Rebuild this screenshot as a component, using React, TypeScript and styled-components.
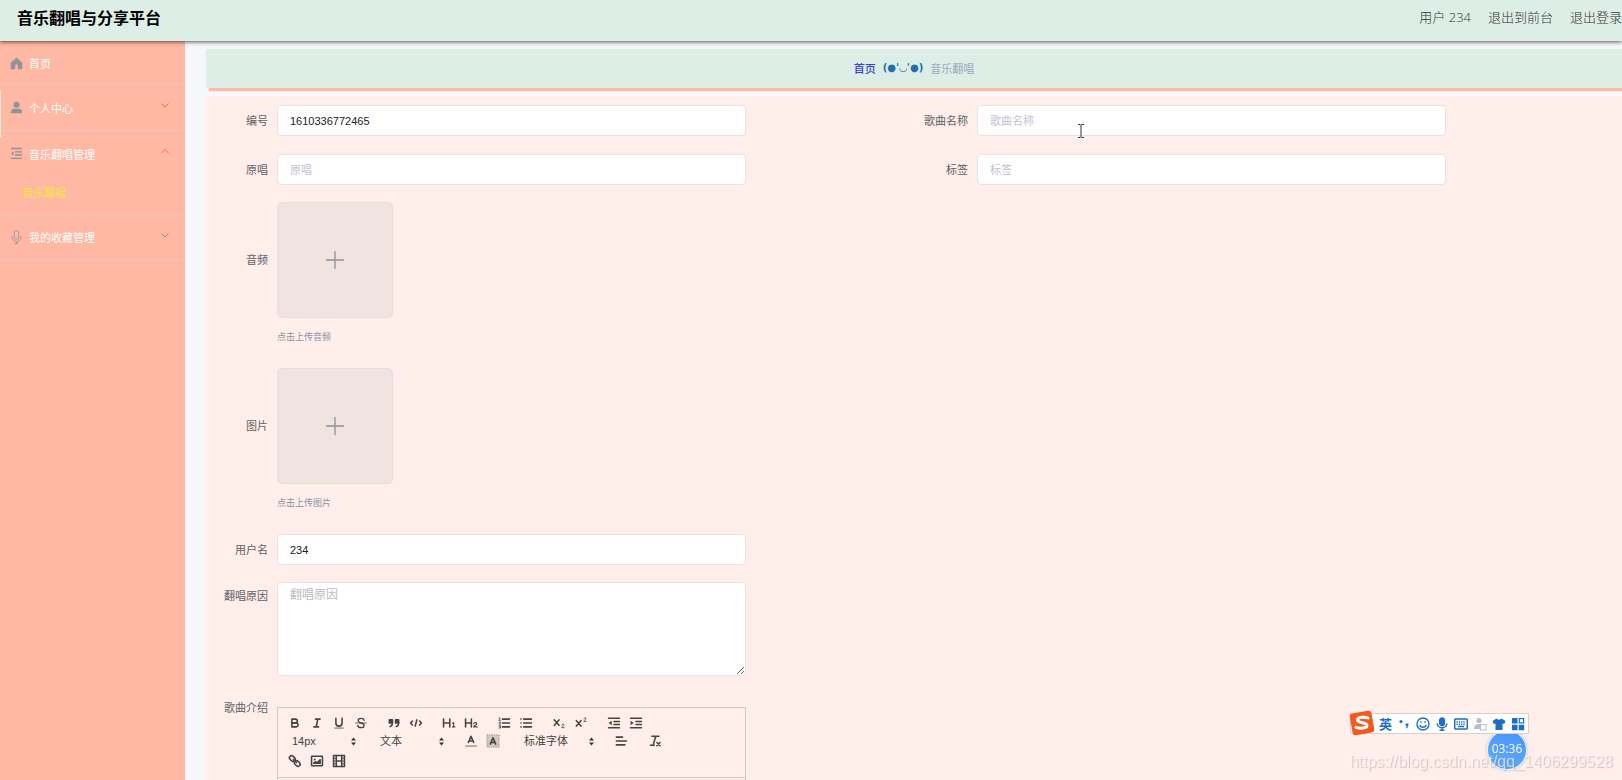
import React from 'react';
import styled, { createGlobalStyle } from 'styled-components';

const SANS = '"Liberation Sans", "Noto Sans CJK SC", sans-serif';

const GlobalStyle = createGlobalStyle`
  * { box-sizing: border-box; }
  html, body, #root { height: 100%; }
  body { margin: 0; font-family: ${SANS}; font-size: 11px; overflow: hidden; }
  button, input, textarea, select { font-family: inherit; margin: 0; }
  a { text-decoration: none; color: inherit; }
  svg { display: block; }
`;

const Shell = styled.div`
  display: flex;
  flex-direction: column;
  height: 100vh;
  overflow: hidden;
  background: #f5f7fa;
`;

const Header = styled.header`
  display: flex;
  align-items: center;
  justify-content: space-between;
  flex: none;
  height: 41px;
  padding: 0 0 3px 17px;
  background: #ddeee7;
  box-shadow: 0 1px 4px rgba(0, 0, 0, 0.65);
  position: relative;
  z-index: 2;
`;

const Brand = styled.h1`
  margin: 0;
  font-size: 16px;
  line-height: 24px;
  font-weight: 700;
  color: #000;
`;

const HeaderNav = styled.nav`
  display: flex;
  gap: 17px;
  padding-bottom: 4px;
  font-family: "Open Sans", "Noto Sans CJK SC", sans-serif;
  font-size: 13px;
  line-height: 20px;
  font-weight: 300;
  color: #333;
  white-space: nowrap;
`;

const Body = styled.div`
  display: flex;
  flex: 1;
  min-height: 0;
`;

const Sidebar = styled.aside`
  flex: none;
  width: 185px;
  background: #ffb8a4;
  position: relative;
`;

const SideHandle = styled.span`
  position: absolute;
  left: 0;
  top: 49px;
  width: 1px;
  height: 47px;
  background: #fde5df;
`;

const Group = styled.div`
  border-bottom: 1px solid #e8c8c0;
`;

const GroupHead = styled.button<{ $h: number }>`
  display: flex;
  align-items: center;
  gap: 6px;
  width: 100%;
  height: ${p => p.$h}px;
  padding: 0 16px 0 10px;
  border: 0;
  background: transparent;
  font-size: 11px;
  color: #fff;
  text-align: left;
  & > span { flex: 1; }
`;

const ChevronIcon = styled.svg`
  margin-bottom: 5px;
`;

const SubLink = styled.a`
  display: block;
  height: 38px;
  padding-left: 22px;
  line-height: 34px;
  font-size: 11px;
  color: #f5e63c;
`;

const Main = styled.main`
  flex: 1;
  min-width: 0;
  display: flex;
  flex-direction: column;
  gap: 8px;
  padding: 8px 0 0 21px;
`;

const Crumbs = styled.nav`
  display: flex;
  align-items: center;
  justify-content: center;
  gap: 7px;
  flex: none;
  height: 39px;
  padding-bottom: 2px;
  background: #ddeee7;
  box-shadow: 3px 3px 1px #ffb8a4;
  color: #97a8be;
  font-size: 11px;
  white-space: nowrap;
`;

const CrumbHome = styled.a`
  color: #3a3fd8;
  font-weight: 500;
`;

const CrumbFace = styled.span`
  color: #1f6fb0;
  font-size: 10px;
  font-weight: 700;
  font-family: "DejaVu Sans", sans-serif;
`;

const Panel = styled.form`
  flex: 1;
  display: flex;
  flex-direction: column;
  padding: 9px 16px 0 0;
  background: #ffeee9;
`;

const Row = styled.div<{ $gap?: number }>`
  display: grid;
  grid-template-columns: 1fr 1fr;
  flex: none;
  margin-bottom: ${p => p.$gap ?? 18}px;
`;

const Field = styled.div<{ $top?: boolean }>`
  display: grid;
  grid-template-columns: 62px 67%;
  column-gap: 9px;
  align-items: ${p => (p.$top ? 'start' : 'center')};
`;

const Label = styled.label`
  text-align: right;
  line-height: 28px;
  color: #606266;
  white-space: nowrap;
`;

const Input = styled.input`
  width: 100%;
  height: 31px;
  padding: 0 12px;
  border: 1px solid #e4e4ea;
  border-radius: 4px;
  background: #fff;
  font-size: 11px;
  color: #222;
  outline: 0;
  &::placeholder { color: #c0c4cc; opacity: 1; }
`;

const TextArea = styled.textarea`
  display: block;
  width: 100%;
  height: 94px;
  padding: 4px 12px;
  border: 1px solid #e4e4ea;
  border-radius: 4px;
  background: #fff;
  font-size: 12px;
  line-height: 16px;
  resize: vertical;
  outline: 0;
  &::placeholder { color: #bbb; opacity: 1; }
`;

const UploadBox = styled.button`
  display: flex;
  align-items: center;
  justify-content: center;
  width: 116px;
  height: 116px;
  padding: 0;
  border: 1px solid #e2dfe3;
  border-radius: 5px;
  background: #f0e3e0;
`;

const Tip = styled.p`
  margin: 12px 0 0 71px;
  font-size: 9px;
  line-height: 14px;
  color: #8d91a3;
`;

const Upload = styled.div`
  flex: none;
  margin-bottom: 24px;
`;

const Editor = styled.div`
  height: 300px;
  margin-top: 13px;
  border: 1px solid #ccc;
`;

const Toolbar = styled.div`
  padding: 6px;
  border-bottom: 1px solid #ccc;
`;

const ToolRow = styled.div<{ $gap?: number; $h?: number }>`
  display: flex;
  gap: ${p => p.$gap ?? 12}px;
  height: ${p => p.$h ?? 18}px;
`;

const ToolGroup = styled.span`
  display: flex;
  align-items: center;
`;

const Tool = styled.button`
  display: flex;
  align-items: center;
  justify-content: center;
  width: 22px;
  height: 18px;
  padding: 0;
  border: 0;
  background: transparent;
  svg {
    width: 14px;
    height: 14px;
    fill: none;
    stroke: #444;
    stroke-width: 2;
    stroke-linecap: round;
    stroke-linejoin: round;
  }
  .fill { fill: #444; stroke: none; }
  .thin { stroke-width: 1; }
`;

const Picker = styled.span<{ $w: number }>`
  display: flex;
  align-items: center;
  width: ${p => p.$w}px;
  padding: 0 4px 0 8px;
  svg { flex: none; width: 5px; height: 9px; fill: #333; }
`;

const PickerSelect = styled.select`
  flex: 1;
  min-width: 0;
  padding: 0;
  border: 0;
  appearance: none;
  background: transparent;
  font-size: 11px;
  line-height: 16px;
  color: #444;
`;

const ImeBar = styled.div`
  position: fixed;
  right: 93px;
  bottom: 46px;
  z-index: 5;
  display: flex;
  align-items: center;
  gap: 5px;
  height: 21px;
  padding: 0 3px 0 28px;
  border: 1px solid #dccfd0;
  background: #fff;
  color: #1d6fc6;
  font-size: 13px;
  font-weight: 700;
  svg { width: 14px; height: 14px; }
`;

const ImeLogo = styled.span`
  position: absolute;
  left: -2px;
  top: -4px;
  svg { width: 26px; height: 26px; }
`;

const Timer = styled.div`
  position: fixed;
  right: 95px;
  bottom: 10px;
  z-index: 4;
  width: 40px;
  height: 40px;
  border: 1px solid #e6f0ff;
  border-radius: 50%;
  background: linear-gradient(200deg, #4a90f5, #5fb0ff);
  box-shadow: 0 0 3px rgba(90, 140, 220, 0.5);
  font: 12px/36px "Open Sans", sans-serif;
  color: #fff;
  text-align: center;
`;

const Watermark = styled.div`
  position: fixed;
  right: 9px;
  bottom: 8px;
  z-index: 6;
  font-size: 16px;
  line-height: 20px;
  color: rgba(255, 250, 250, 0.65);
  text-shadow: 1px 1px 1px rgba(120, 110, 120, 0.35);
  white-space: nowrap;
`;

const Pointer = styled.svg`
  position: fixed;
  left: 1077px;
  top: 124px;
  z-index: 6;
`;

const Chevron = ({ up }: { up?: boolean }) => (
  <ChevronIcon width="8" height="8" viewBox="0 0 8 8" fill="none" stroke="#f5645a" strokeWidth="1">
    <path d={up ? 'M.5 6 4 2.500 7.500 6' : 'M.5 2.500 4 6 7.500 2.500'} />
  </ChevronIcon>
);

const HomeIcon = () => (
  <svg width="13" height="15" viewBox="0 0 13 15" fill="#909399">
    <path d="M6.500 3 1 7.800V14h3.900v-3.400a1.600 1.600 0 0 1 3.200 0V14H12V7.800z" stroke="#909399" strokeWidth=".6" strokeLinejoin="round" />
  </svg>
);
const UserIcon = () => (
  <svg width="13" height="13" viewBox="0 0 13 13" fill="#909399">
    <circle cx="6.500" cy="3.700" r="3" />
    <path d="M1 12.300V10.600C1 8.800 2.300 7.700 4 7.700h5c1.700 0 3 1.100 3 2.900v1.700z" />
  </svg>
);
const MenuIcon = () => (
  <svg width="13" height="13" viewBox="0 0 13 13" fill="none" stroke="#909399" strokeWidth="1.300">
    <path d="M1 1.500h11M5 4.800h7M5 8h7M1 11.300h11" />
    <path d="M3.500 4.200v4.600L1 6.500z" fill="#909399" stroke="none" />
  </svg>
);
const MicIcon = () => (
  <svg width="13" height="14" viewBox="0 0 13 14" fill="none" stroke="#a39a9b" strokeWidth="1">
    <rect x="4.200" y=".6" width="4.600" height="8.600" rx="2.300" />
    <path d="M2 6v1a4.500 4.500 0 0 0 9 0V6M6.500 11.500v2M4.500 13.500h4" />
  </svg>
);
const Plus = () => (
  <svg width="18" height="18" viewBox="0 0 18 18" stroke="#8c939d" strokeWidth="1.300">
    <path d="M9 0v18M0 9h18" />
  </svg>
);

const icons: Record<string, React.ReactNode> = {
  加粗: (
    <>
      <path d="M5 4h4.500A2.500 2.500 0 0 1 12 6.500 2.500 2.500 0 0 1 9.500 9H5z" />
      <path d="M5 9h5.500A2.500 2.500 0 0 1 13 11.500 2.500 2.500 0 0 1 10.500 14H5z" />
    </>
  ),
  斜体: <path d="M7 4h6M5 14h6M8 14l2-10" />,
  下划线: (
    <>
      <path d="M5 3v6a4 4 0 0 0 8 0V3" />
      <rect className="fill" x="3" y="15" width="12" height="1" />
    </>
  ),
  删除线: (
    <>
      <path className="thin" d="M2 9h14" />
      <path d="M13 5.500C12.500 3.500 10.800 3 9 3 6.800 3 5.300 4 5.300 5.800 5.300 7.600 7 8.400 9 9c2.500.7 4 1.500 4 3.200 0 2-1.800 2.800-4 2.800-2 0-3.800-.8-4.300-2.800" strokeWidth="1.700" />
    </>
  ),
  引用: (
    <>
      <rect className="fill" x="2" y="4" width="6" height="6" rx="1" />
      <rect className="fill" x="10" y="4" width="6" height="6" rx="1" />
      <path d="M7 8c0 3-1 5-3 5.500M15 8c0 3-1 5-3 5.500" />
    </>
  ),
  代码: <path d="M4.500 6.500 2 9l2.500 2.500M13.500 6.500 16 9l-2.500 2.500M10 5 8 13" />,
  标题一: (
    <>
      <path d="M2 4v10M10 4v10M10 9H2" />
      <path d="M13.500 9.500 15 8.500V14M13.500 14h3" strokeWidth="1.400" />
    </>
  ),
  标题二: (
    <>
      <path d="M2 4v10M9.500 4v10M9.500 9H2" />
      <path d="M12.500 10c.3-2 4-2 4 0 0 1.500-4 2.500-4 4h4.500" strokeWidth="1.400" />
    </>
  ),
  有序列表: (
    <>
      <path d="M7 4h9M7 9h9M7 14h9" />
      <path className="thin" d="M2.500 2.500h1v3M2.500 5.500h2M2.500 8h2v1l-2 1.500h2M2.500 12.500h2v3h-2M3 14h1.500" />
    </>
  ),
  无序列表: <path d="M6 4h10M6 9h10M6 14h10M2.500 4h.1M2.500 9h.1M2.500 14h.1" />,
  下标: (
    <>
      <path d="M3 5l6 7M9 5l-6 7" />
      <path className="thin" d="M12.500 11.500c.3-1.500 3-1.300 3 0s-3 2-3 3.500h3.200" />
    </>
  ),
  上标: (
    <>
      <path d="M3 6l6 7M9 6l-6 7" />
      <path className="thin" d="M12.500 3.500c.3-1.500 3-1.300 3 0s-3 2-3 3.500h3.200" />
    </>
  ),
  减少缩进: (
    <>
      <path d="M2 3h14M2 15h14M9 7h7M9 11h7" />
      <path className="fill" d="M6 6v6L2 9z" />
    </>
  ),
  增加缩进: (
    <>
      <path d="M2 3h14M2 15h14M9 7h7M9 11h7" />
      <path className="fill" d="M2 6v6l4-3z" />
    </>
  ),
  字体颜色: (
    <>
      <path d="M5.500 11 9 3l3.500 8M6.800 9h4.500" />
      <path className="thin" d="M2 15.500h14" />
    </>
  ),
  背景颜色: (
    <>
      <rect className="thin" x="1.500" y="1.500" width="15" height="15" strokeDasharray="1 2" />
      <rect x="2" y="2" width="14" height="14" fill="#d3c7c4" stroke="none" />
      <path d="M5.500 13 9 5l3.500 8M6.800 11h4.500" />
    </>
  ),
  对齐: <path d="M3 9h13M3 14h11M3 4h8" />,
  清除格式: (
    <>
      <path d="M5 3h9M7 13 10 3M3 14.500h5" />
      <path d="M11.500 11l4 4M15.500 11l-4 4" />
    </>
  ),
  链接: (
    <>
      <rect x="1.500" y="3" width="8" height="5.500" rx="2.700" transform="rotate(45 5.500 5.700)" />
      <rect x="8" y="9.500" width="8" height="5.500" rx="2.700" transform="rotate(45 12 12.200)" />
      <path d="M7 7l4 4" />
    </>
  ),
  图片: (
    <>
      <rect x="2" y="3" width="14" height="12" rx="0.500" />
      <circle className="fill" cx="6" cy="7" r="1.200" />
      <path className="fill" d="M4 13v-2l3-2 2 1 4-4 1 1v6z" />
    </>
  ),
  视频: (
    <>
      <rect x="2" y="2" width="14" height="14" />
      <path d="M5.500 2v14M12.500 2v14M6 9h6" />
      <path className="thin" d="M2 5.500h3M2 9h3M2 12.500h3M13 5.500h3M13 9h3M13 12.500h3" />
    </>
  ),
};

const Tools = ({ names }: { names: string[] }) => (
  <ToolGroup>
    {names.map(n => (
      <Tool key={n} type="button" aria-label={n}>
        <svg viewBox="0 0 18 18">{icons[n]}</svg>
      </Tool>
    ))}
  </ToolGroup>
);

const PickerBox = ({ label, value, w }: { label: string; value: string; w: number }) => (
  <Picker $w={w}>
    <PickerSelect aria-label={label} defaultValue={value}>
      <option>{value}</option>
    </PickerSelect>
    <svg viewBox="0 0 5 9">
      <path d="M0 3.500 2.500.5 5 3.500zM0 5.500h5L2.500 8.500z" />
    </svg>
  </Picker>
);

type TextFieldProps = { id: string; label: string; value?: string };
const TextField = ({ id, label, value }: TextFieldProps) => (
  <Field>
    <Label htmlFor={id}>{label}</Label>
    <Input id={id} placeholder={label} defaultValue={value} />
  </Field>
);

const UploadField = ({ id, label }: { id: string; label: string }) => (
  <Upload>
    <Field>
      <Label htmlFor={id}>{label}</Label>
      <UploadBox id={id} type="button">
        <Plus />
      </UploadBox>
    </Field>
    <Tip>点击上传{label}</Tip>
  </Upload>
);

export default function App() {
  return (
    <>
      <GlobalStyle />
      <Shell>
        <Header>
          <Brand>音乐翻唱与分享平台</Brand>
          <HeaderNav>
            <span>用户 234</span>
            <a href="#front">退出到前台</a>
            <a href="#logout">退出登录</a>
          </HeaderNav>
        </Header>
        <Body>
          <Sidebar>
            <Group>
              <GroupHead type="button" $h={43}><HomeIcon /><span>首页</span></GroupHead>
            </Group>
            <Group>
              <GroupHead type="button" $h={45}><UserIcon /><span>个人中心</span><Chevron /></GroupHead>
            </Group>
            <Group>
              <GroupHead type="button" $h={45}><MenuIcon /><span>音乐翻唱管理</span><Chevron up /></GroupHead>
              <SubLink href="#cover">音乐翻唱</SubLink>
            </Group>
            <Group>
              <GroupHead type="button" $h={44}><MicIcon /><span>我的收藏管理</span><Chevron /></GroupHead>
            </Group>
            <SideHandle />
          </Sidebar>
          <Main>
            <Crumbs>
              <CrumbHome href="#home">首页</CrumbHome>
              <CrumbFace>(●'◡'●)</CrumbFace>
              <span>音乐翻唱</span>
            </Crumbs>
            <Panel>
              <Row>
                <TextField id="no" label="编号" value="1610336772465" />
                <TextField id="song" label="歌曲名称" />
              </Row>
              <Row $gap={17}>
                <TextField id="singer" label="原唱" />
                <TextField id="tag" label="标签" />
              </Row>
              <UploadField id="audio" label="音频" />
              <UploadField id="image" label="图片" />
              <Row $gap={17}>
                <TextField id="user" label="用户名" value="234" />
              </Row>
              <Row>
                <Field $top>
                  <Label htmlFor="reason">翻唱原因</Label>
                  <TextArea id="reason" placeholder="翻唱原因" />
                </Field>
              </Row>
              <Row>
                <Field $top>
                  <Label as="span">歌曲介绍</Label>
                  <Editor>
                    <Toolbar>
                      <ToolRow $gap={11}>
                        <Tools names={['加粗', '斜体', '下划线', '删除线']} />
                        <Tools names={['引用', '代码']} />
                        <Tools names={['标题一', '标题二']} />
                        <Tools names={['有序列表', '无序列表']} />
                        <Tools names={['下标', '上标']} />
                        <Tools names={['减少缩进', '增加缩进']} />
                      </ToolRow>
                      <ToolRow>
                        <PickerBox label="字号" value="14px" w={76} />
                        <PickerBox label="段落" value="文本" w={76} />
                        <Tools names={['字体颜色', '背景颜色']} />
                        <PickerBox label="字体" value="标准字体" w={82} />
                        <Tools names={['对齐']} />
                        <Tools names={['清除格式']} />
                      </ToolRow>
                      <ToolRow $h={21}>
                        <Tools names={['链接', '图片', '视频']} />
                      </ToolRow>
                    </Toolbar>
                  </Editor>
                </Field>
              </Row>
            </Panel>
          </Main>
        </Body>
      </Shell>

      <Pointer width="8" height="14" viewBox="0 0 8 14" fill="none" stroke="#333" strokeWidth="1">
        <path d="M1 .5h2.500M4.500.5H7M4 1v12M1 13.500h2.500M4.500 13.500H7" />
      </Pointer>
      <Timer>03:36</Timer>
      <ImeBar>
        <ImeLogo>
          <svg viewBox="0 0 26 26">
            <rect x="2" y="2" width="22" height="22" rx="3" fill="#f4591f" transform="rotate(-10 13 13)" />
            <path d="M19 8c-3-1.500-10.500-1-10.500 2 0 3.500 9.500 2 9.500 5.500 0 3-7 3.300-11 1.800" fill="none" stroke="#fff" strokeWidth="3" strokeLinecap="round" />
          </svg>
        </ImeLogo>
        <span>英</span>
        <svg viewBox="0 0 14 14" fill="#1d6fc6">
          <circle cx="4" cy="4.500" r="1.600" />
          <path d="M8.500 6.500h3c0 2.500-.5 4-2.300 5l-.5-.8c.8-.6 1-1.200 1-2H8.500z" />
        </svg>
        <svg viewBox="0 0 14 14" fill="none" stroke="#1d6fc6" strokeWidth="1.400">
          <circle cx="7" cy="7" r="6" />
          <path d="M3.800 8c.8 3 5.600 3 6.400 0M5 4.300v1.500M9 4.300v1.500" />
        </svg>
        <svg viewBox="0 0 14 14" fill="none" stroke="#1d6fc6" strokeWidth="1.500">
          <rect x="4.700" y="1" width="4.600" height="7.500" rx="2.300" fill="#1d6fc6" />
          <path d="M2.200 6.500a4.800 4.300 0 0 0 9.600 0M7 11v2.200M4.500 13.300h5" />
        </svg>
        <svg viewBox="0 0 14 14" fill="none" stroke="#1d6fc6" strokeWidth="1.500">
          <rect x=".7" y="2" width="12.600" height="10" rx="1" />
          <path d="M2.500 5h9M2.500 7.200h9" strokeDasharray="1.300 1" />
          <path d="M4 9.500h6" />
        </svg>
        <svg viewBox="0 0 14 14" fill="#b4bccd">
          <circle cx="6" cy="3.500" r="2.600" />
          <path d="M1 12c0-3.500 2-5 5-5h3v5z" />
          <rect x="7.500" y="7.500" width="5.500" height="5.500" fill="#fff" stroke="#b4bccd" />
        </svg>
        <svg viewBox="0 0 14 14" fill="#1d6fc6">
          <path d="M4.500 1.500c.8 1.500 4.200 1.500 5 0L13.500 4l-1.300 3-1.700-.6V13h-7V6.400L1.800 7 .5 4z" />
        </svg>
        <svg viewBox="0 0 14 14" fill="#1d6fc6">
          <path d="M1 1h5.500v5.500H1zM1 7.700h5.500v5.500H1zM7.700 7.700h5.500v5.500H7.700z" />
          <rect x="8.300" y="1.600" width="4.300" height="4.300" fill="none" stroke="#1d6fc6" strokeWidth="1.200" />
        </svg>
      </ImeBar>
      <Watermark>https://blog.csdn.net/qq_1406299528</Watermark>
    </>
  );
}
